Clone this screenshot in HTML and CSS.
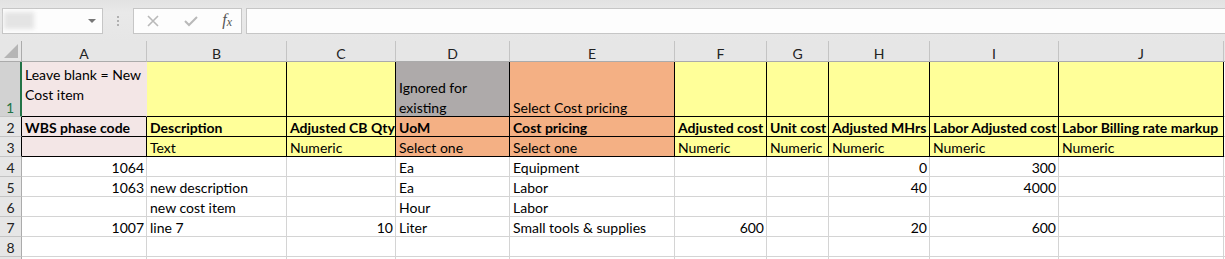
FILE: index.html
```html
<!DOCTYPE html>
<html lang="en">
<head>
    <meta charset="UTF-8">
    <title>Cost items import</title>
    <link rel="stylesheet" href="styles.css">
</head>
<body>
    <div class="toolbar">
        <div class="namebox">
            <span class="smudge"></span>
            <span class="caret"></span>
        </div>
        <div class="grip"><i></i><i></i><i></i></div>
        <div class="fxbox">
            <svg width="14" height="14" viewBox="0 0 14 14"><path d="M2 2 L12 12 M12 2 L2 12" stroke="#b9b9b9" stroke-width="1.6" fill="none"/></svg>
            <svg width="16" height="14" viewBox="0 0 16 14"><path d="M2 7 L6 11 L14 3" stroke="#b9b9b9" stroke-width="2" fill="none"/></svg>
            <span class="fx">f<sub>x</sub></span>
        </div>
        <div class="formula"></div>
    </div>

    <div class="sheet">
        <div class="hd corner"><span class="tri"></span></div>
        <div class="hd">A</div><div class="hd">B</div><div class="hd">C</div><div class="hd">D</div><div class="hd">E</div>
        <div class="hd">F</div><div class="hd">G</div><div class="hd">H</div><div class="hd">I</div><div class="hd">J</div><div class="hd"></div>

        <div class="rh sel">1</div>
        <div class="c p top open">Leave blank = New Cost item</div>
        <div class="c y k"></div>
        <div class="c y k"></div>
        <div class="c g k two">Ignored for existing</div>
        <div class="c o k one">Select Cost pricing</div>
        <div class="c y k"></div><div class="c y k"></div><div class="c y k"></div><div class="c y k"></div><div class="c y k"></div>
        <div class="c"></div>

        <div class="rh kl">2</div>
        <div class="c p k b">WBS phase code</div>
        <div class="c y k b">Description</div>
        <div class="c y k b">Adjusted CB Qty</div>
        <div class="c o k b">UoM</div>
        <div class="c o k b">Cost pricing</div>
        <div class="c y k b">Adjusted cost</div>
        <div class="c y k b">Unit cost</div>
        <div class="c y k b">Adjusted MHrs</div>
        <div class="c y k b">Labor Adjusted cost</div>
        <div class="c y k b">Labor Billing rate markup</div>
        <div class="c"></div>

        <div class="rh kl">3</div>
        <div class="c p k"></div>
        <div class="c y k">Text</div>
        <div class="c y k">Numeric</div>
        <div class="c o k">Select one</div>
        <div class="c o k">Select one</div>
        <div class="c y k">Numeric</div><div class="c y k">Numeric</div><div class="c y k">Numeric</div><div class="c y k">Numeric</div><div class="c y k">Numeric</div>
        <div class="c"></div>

        <div class="rh">4</div>
        <div class="c n">1064</div><div class="c"></div><div class="c"></div>
        <div class="c">Ea</div><div class="c">Equipment</div><div class="c"></div><div class="c"></div>
        <div class="c n">0</div><div class="c n">300</div><div class="c"></div><div class="c"></div>

        <div class="rh">5</div>
        <div class="c n">1063</div><div class="c">new description</div><div class="c"></div>
        <div class="c">Ea</div><div class="c">Labor</div><div class="c"></div><div class="c"></div>
        <div class="c n">40</div><div class="c n">4000</div><div class="c"></div><div class="c"></div>

        <div class="rh">6</div>
        <div class="c"></div><div class="c">new cost item</div><div class="c"></div>
        <div class="c">Hour</div><div class="c">Labor</div><div class="c"></div><div class="c"></div>
        <div class="c"></div><div class="c"></div><div class="c"></div><div class="c"></div>

        <div class="rh">7</div>
        <div class="c n">1007</div><div class="c">line 7</div><div class="c n">10</div>
        <div class="c">Liter</div><div class="c">Small tools &amp; supplies</div><div class="c n">600</div><div class="c"></div>
        <div class="c n">20</div><div class="c n">600</div><div class="c"></div><div class="c"></div>

        <div class="rh">8</div>
        <div class="c"></div><div class="c"></div><div class="c"></div><div class="c"></div><div class="c"></div><div class="c"></div>
        <div class="c"></div><div class="c"></div><div class="c"></div><div class="c"></div><div class="c"></div>

        <div class="rh"></div>
        <div class="c"></div><div class="c"></div><div class="c"></div><div class="c"></div><div class="c"></div><div class="c"></div>
        <div class="c"></div><div class="c"></div><div class="c"></div><div class="c"></div><div class="c"></div>
    </div>
</body>
</html>
```

FILE: styles.css
```css
body {
    margin: 0;
    height: 259px;
    overflow: hidden;
    background: #e6e6e6;
    font-family: "Lato", "Liberation Sans", sans-serif;
}

/* formula bar strip */
.toolbar {
    display: flex;
    align-items: center;
    height: 41px;
    background: linear-gradient(#e2e2e2, #e9e9e9 30%, #e6e6e6);
}
.namebox {
    display: flex;
    align-items: center;
    justify-content: space-between;
    box-sizing: border-box;
    width: 101px;
    height: 26px;
    margin-left: 2px;
    padding: 0 6px 0 1px;
    background: #fdfdfd;
    border: 1px solid #c6c6c6;
}
.smudge {
    width: 30px;
    height: 17px;
    background: #e4e4e4;
    filter: blur(2px);
}
.caret {
    width: 0;
    height: 0;
    border-left: 4px solid transparent;
    border-right: 4px solid transparent;
    border-top: 4px solid #777;
}
.grip {
    display: flex;
    flex-direction: column;
    gap: 2px;
    margin: 0 14px;
}
.grip i {
    display: block;
    width: 2px;
    height: 2px;
    background: #b0b0b0;
}
.fxbox {
    display: flex;
    align-items: center;
    justify-content: space-between;
    box-sizing: border-box;
    width: 109px;
    height: 26px;
    padding: 0 9px 0 12px;
    background: #fdfdfd;
    border: 1px solid #c6c6c6;
}
.fx {
    font-family: "Liberation Serif", serif;
    font-style: italic;
    font-size: 16px;
    color: #555;
}
.fx sub {
    font-size: 12px;
    vertical-align: -1px;
}
.formula {
    flex: 1;
    height: 26px;
    margin-left: 4px;
    box-sizing: border-box;
    background: #fdfdfd;
    border: 1px solid #c6c6c6;
    border-right: none;
}

/* grid */
.sheet {
    display: grid;
    grid-template-columns: 22px 125px 140px 109px 114px 165px 92px 62px 101px 129px 165px 20px;
    grid-template-rows: 21px 55px repeat(8, 20px);
    background: #fff;
    font-size: 14px;
    color: #000;
}
.hd {
    display: flex;
    align-items: center;
    justify-content: center;
    box-sizing: border-box;
    background: #e6e6e6;
    border-right: 1px solid #c4c4c4;
    border-bottom: 1px solid #ababab;
    color: #222;
    font-size: 14px;
    padding-top: 5px;
}
.corner {
    position: relative;
    border-right: 1px solid #ababab;
}
.tri {
    position: absolute;
    right: 3px;
    bottom: 3px;
    width: 0;
    height: 0;
    border-left: 14px solid transparent;
    border-bottom: 14px solid #b5b5b5;
}
.rh {
    display: flex;
    align-items: flex-end;
    justify-content: center;
    box-sizing: border-box;
    background: #e6e6e6;
    border-right: 1px solid #ababab;
    border-bottom: 1px solid #c4c4c4;
    color: #222;
    line-height: 16px;
}
.rh.sel {
    background: #d2d2d2;
    color: #217346;
    border-right: 2px solid #217346;
}
.rh.kl {
    border-right-color: #000;
}
.c {
    display: flex;
    align-items: flex-end;
    box-sizing: border-box;
    padding: 0 2px 0 3px;
    border-right: 1px solid #d4d4d4;
    border-bottom: 1px solid #d4d4d4;
    line-height: 16px;
    white-space: nowrap;
    overflow: hidden;
}
.c.y { background: #ffff99; }
.c.p { background: #f3e6e6; }
.c.o { background: #f4b084; }
.c.g { background: #aeaaaa; }
.c.k {
    border-right-color: #000;
    border-bottom-color: #000;
}
.c.b { font-weight: bold; }
.c.n { justify-content: flex-end; }
.c.top,
.c.two,
.c.one {
    align-items: flex-start;
    line-height: 20px;
    white-space: normal;
}
.c.top {
    padding-top: 3px;
    border-bottom-color: #000;
}
.c.two { padding-top: 16px; }
.c.one { padding-top: 36px; }
.c.open { border-right-color: #f3e6e6; }
```
